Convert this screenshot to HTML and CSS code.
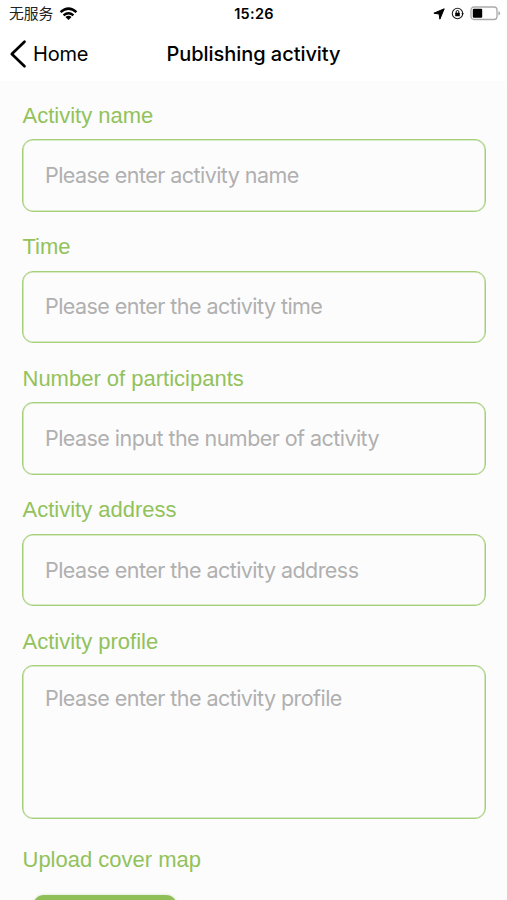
FILE: index.html
```html
<!DOCTYPE html>
<html lang="en">
<head>
<meta charset="utf-8">
<title>Publishing activity</title>
<link rel="stylesheet" href="styles.css">
</head>
<body>
<header>
  <div class="status">
    <div class="status-left">
      <span class="carrier" lang="zh-CN">无服务</span>
      <svg class="wifi" width="19" height="14" viewBox="0 0 20 15" fill="none" stroke="#000" stroke-width="2.6"><path d="M1.5 5.5Q10-2 18.5 5.5M4.7 9Q10 4.5 15.3 9"/><path d="M10 14L6.7 10.8Q10 8.2 13.3 10.8Z" fill="#000" stroke="none"/></svg>
    </div>
    <span class="clock">15:26</span>
    <div class="status-right">
      <svg width="12" height="12" viewBox="0 0 12 12"><path d="M11.2.8L6.9 11.2 6.1 6 .9 5.2Z" fill="#000" stroke="#000" stroke-linejoin="round"/></svg>
      <svg width="13" height="13" viewBox="0 0 13 13" fill="none"><circle cx="6.5" cy="6.5" r="5.2" stroke="#222" stroke-width="1.1"/><path d="M10.4 6.2h2.4l-1.2 2z" fill="#000"/><rect x="4.2" y="5.8" width="4.6" height="3.5" rx=".5" fill="#000"/><path d="M5.2 6V4.8a1.3 1.3 0 0 1 2.6 0V6" stroke="#000"/></svg>
      <svg width="31" height="15" viewBox="0 0 31 15"><rect x="1" y="1" width="26" height="12.5" rx="3" fill="#fff" stroke="#aaa" stroke-width="1.3"/><rect x="2.8" y="2.8" width="9.4" height="9" rx="1" fill="#000"/><path d="M28.4 5v4.6q1.7-.7 1.7-2.3T28.4 5Z" fill="#aaa"/></svg>
    </div>
  </div>
  <nav class="nav">
    <a class="back"><svg width="18" height="30" viewBox="0 0 18 30" fill="none" stroke="#000" stroke-width="2.7" stroke-linecap="round" stroke-linejoin="round"><path d="M15.5 2.8L2.8 15l12.7 12.2"/></svg><span>Home</span></a>
    <h1>Publishing activity</h1>
  </nav>
</header>
<main class="form">
  <div class="field"><label for="name">Activity name</label><input id="name" placeholder="Please enter activity name"></div>
  <div class="field"><label for="time">Time</label><input id="time" placeholder="Please enter the activity time"></div>
  <div class="field"><label for="count">Number of participants</label><input id="count" placeholder="Please input the number of activity"></div>
  <div class="field"><label for="address">Activity address</label><input id="address" placeholder="Please enter the activity address"></div>
  <div class="field"><label for="profile">Activity profile</label><textarea id="profile" placeholder="Please enter the activity profile"></textarea></div>
  <div class="upload"><label>Upload cover map</label><button type="button" aria-label="Upload"></button></div>
</main>
</body>
</html>
```
FILE: styles.css
```css
* { box-sizing: border-box; }
html, body { height: 100%; }
body {
  margin: 0;
  display: flex;
  flex-direction: column;
  overflow: hidden;
  background: #fcfcfc;
  color: #000;
  font-family: Inter, "Noto Sans CJK SC", sans-serif;
}
header { flex: none; height: 81px; background: #fff; }
svg { display: block; flex: none; }
.status {
  display: grid;
  grid-template-columns: 1fr auto 1fr;
  align-items: center;
  height: 27px;
  padding: 0 6px 0 9px;
}
.status-left, .status-right { display: flex; align-items: center; }
.status-left { gap: 6px; }
.status-right { justify-content: flex-end; gap: 6px; }
.carrier { font: 14.8px/25px "Noto Sans CJK SC", sans-serif; color: #222; padding-bottom: 2px; }
.clock { font-size: 14.5px; font-weight: 600; letter-spacing: .3px; margin-right: 2px; }
.nav {
  display: grid;
  grid-template-columns: 1fr auto 1fr;
  align-items: center;
  height: 53px;
  padding: 0 9px;
}
.back { display: flex; align-items: center; gap: 6px; font-size: 20px; letter-spacing: -.2px; }
h1 { margin: 0; font-size: 20px; font-weight: 500; letter-spacing: -.05px; }
.form { flex: none; padding: 21.5px 22px 0; }
.field { margin-bottom: 22.5px; }
label {
  display: block;
  height: 26px;
  margin-bottom: 10.5px;
  padding-left: .5px;
  font: 22px/26px "Liberation Sans", sans-serif;
  color: #92c25b;
}
input, textarea {
  display: block;
  width: 463.5px;
  height: 72.6px;
  padding: 0 22px 1px;
  border: 1px solid #a5cf78;
  border-radius: 11px;
  outline: 0;
  background: #fcfcfc;
  box-shadow: inset 0 0 0 .6px #b5d78f;
  font: 21.5px/28px Inter, sans-serif;
  letter-spacing: -.55px;
  resize: none;
}
textarea { height: 153.5px; padding-top: 17.5px; }
::placeholder { color: #b0b0b0; opacity: 1; }
.upload { padding-top: 6px; }
.upload label { margin-bottom: 22px; }
button {
  display: block;
  width: 144px;
  height: 48px;
  margin-left: 11px;
  border: 0;
  border-radius: 11px;
  background: #8fc057;
  box-shadow: 0 0 3px #d5dfca;
}
```
